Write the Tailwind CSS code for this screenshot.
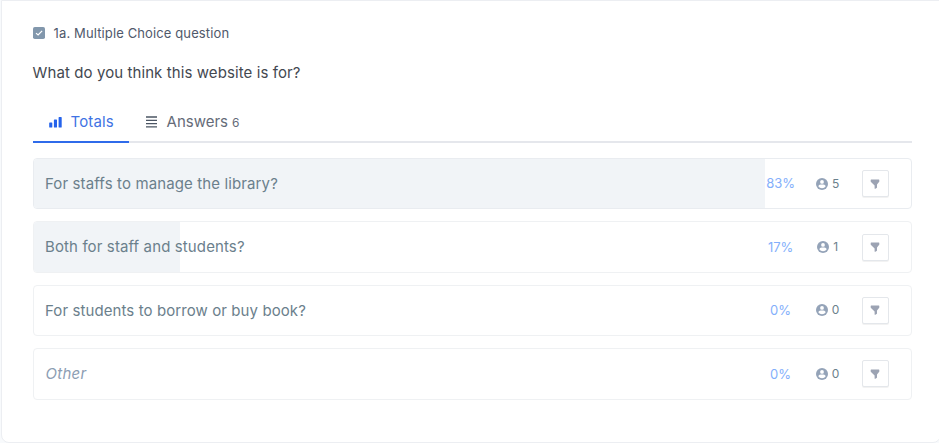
<!DOCTYPE html>
<html lang="en">
<head>
<meta charset="utf-8">
<title>Question results</title>
<script src="https://cdn.jsdelivr.net/npm/@tailwindcss/browser@4"></script>
</head>
<body class="h-[443px] overflow-hidden bg-[#f8fafc] pl-[1px] font-['Inter',sans-serif]">
<svg class="hidden">
  <symbol id="user" viewBox="0 0 12 12"><circle cx="6" cy="6" r="6" fill="#94a3b8"/><circle cx="6" cy="3.900" r="1.900" fill="#fff"/><path d="M2.300 8.300C2.300 6.900 4.500 6.500 6 6.500s3.700.4 3.700 1.800C8.900 9.600 7.600 10.200 6 10.200S3.100 9.600 2.300 8.300Z" fill="#fff"/></symbol>
  <symbol id="filter" viewBox="0 0 10 10"><path d="M1.200.6h7.600q.5 0 .5.500v1.300q0 .4-.3.700L7 5.400v3q0 .4-.4.700l-1.200.6q-.8.400-.8-.5V6.600L1 3.100Q.7 2.800.7 2.400V1.100Q.7.600 1.200.6Z" fill="#9ca3b3"/></symbol>
</svg>
<main class="h-[442.500px] w-[940px] rounded-b-[8px] border border-[#eceef2] bg-white pl-[30.600px] pr-[28px]">
  <header class="flex h-[64.400px] items-center pt-[1px]">
    <svg class="-mt-[1px] h-[12px] w-[12px]" viewBox="0 0 12 12"><rect width="12" height="12" rx="1.800" fill="#8297ac"/><path d="M3 6.100 5.100 8 9.100 3.800" fill="none" stroke="#fff" stroke-width="1.200"/></svg>
    <span class="ml-[9px] whitespace-nowrap text-[13px] tracking-[0.120px] text-[#50596b]">1a. Multiple Choice question</span>
  </header>
  <h1 class="h-[16px] whitespace-nowrap text-[15px] leading-[16px] tracking-[0.090px] text-[#434850]">What do you think this website is for?</h1>
  <nav class="mt-[19.600px] flex h-[42px] w-[879px] border-b-2 border-[#e5e7ec]">
    <div class="flex h-[42px] w-[96px] items-center border-b-2 border-[#2f6bea] pl-[16px] text-[#3f73e4]">
      <svg class="mt-[2px] h-[12px] w-[13px]" viewBox="0 0 13 12"><path d="M.8 6.500h1.900q.6 0 .6.600v3.800q0 .6-.6.600H.8q-.6 0-.6-.6V7.100q0-.6.600-.6zM5.500 3.500h1.900q.6 0 .6.600v6.800q0 .6-.6.600H5.500q-.6 0-.6-.6V4.100q0-.6.600-.6zM10.200.9h1.900q.6 0 .6.600v9.400q0 .6-.6.600h-1.900q-.6 0-.6-.6V1.500q0-.6.600-.6z" fill="#2563eb"/></svg>
      <span class="ml-[9px] pt-[3px] text-[15px] leading-[18px] tracking-[0.100px]">Totals</span>
    </div>
    <div class="flex h-[42px] items-center border-b-2 border-transparent pl-[17px] text-[#656b78]">
      <svg class="mt-[2px] h-[12px] w-[11px]" viewBox="0 0 11 12"><path d="M0 1h11M0 4.300h11M0 7.600h11M0 10.900h11" stroke="#4b5563" stroke-width="1.300"/></svg>
      <span class="ml-[10px] pt-[3px] text-[15px] leading-[18px]">Answers</span><span class="ml-[4px] pt-[4px] text-[12px] leading-[18px]">6</span>
    </div>
  </nav>
  <section class="mt-[15px] flex w-[879px] flex-col gap-[12px] text-[15px] text-[#6b808c]">
    <div class="relative flex h-[51.400px] items-center overflow-hidden rounded-[4px] border border-[#e9ecf0] pl-[11.400px] pr-[22px]">
      <div class="absolute inset-y-0 left-0 w-[731px] bg-[#f1f4f7]"></div>
      <span class="relative flex-1 pt-[1px] tracking-[0.120px]">For staffs to manage the library?</span>
      <span class="w-[40px] pt-[1px] text-center text-[13px] text-[#83affb]">83%</span>
      <span class="ml-[7px] flex w-[40px] items-center justify-center gap-[4px] text-[12px]"><svg class="h-[12px] w-[12px]"><use href="#user"/></svg>5</span>
      <span class="ml-[14px] flex h-[27px] w-[27px] items-center justify-center rounded-[2px] border border-[#e4e7eb] bg-white shadow-2xs"><svg class="h-[10px] w-[10px]"><use href="#filter"/></svg></span>
    </div>
    <div class="relative flex h-[51.400px] items-center overflow-hidden rounded-[4px] border border-[#eff1f3] pl-[11.400px] pr-[22px]">
      <div class="absolute inset-y-0 left-0 w-[146px] bg-[#f1f4f7]"></div>
      <span class="relative flex-1 pt-[1px] tracking-[0.120px]">Both for staff and students?</span>
      <span class="w-[40px] pt-[1px] text-center text-[13px] text-[#83affb]">17%</span>
      <span class="ml-[7px] flex w-[40px] items-center justify-center gap-[4px] text-[12px]"><svg class="h-[12px] w-[12px]"><use href="#user"/></svg>1</span>
      <span class="ml-[14px] flex h-[27px] w-[27px] items-center justify-center rounded-[2px] border border-[#e4e7eb] bg-white shadow-2xs"><svg class="h-[10px] w-[10px]"><use href="#filter"/></svg></span>
    </div>
    <div class="flex h-[51.400px] items-center rounded-[4px] border border-[#eff1f3] pl-[11.400px] pr-[22px]">
      <span class="flex-1 pt-[1px] tracking-[0.090px]">For students to borrow or buy book?</span>
      <span class="w-[40px] pt-[1px] text-center text-[13px] text-[#83affb]">0%</span>
      <span class="ml-[7px] flex w-[40px] items-center justify-center gap-[4px] text-[12px]"><svg class="h-[12px] w-[12px]"><use href="#user"/></svg>0</span>
      <span class="ml-[14px] flex h-[27px] w-[27px] items-center justify-center rounded-[2px] border border-[#e4e7eb] bg-white shadow-2xs"><svg class="h-[10px] w-[10px]"><use href="#filter"/></svg></span>
    </div>
    <div class="flex h-[51.400px] items-center rounded-[4px] border border-[#eff1f3] pl-[12px] pr-[22px]">
      <span class="flex-1 italic tracking-[0.250px] text-[#8c9db3]">Other</span>
      <span class="w-[40px] pt-[1px] text-center text-[13px] text-[#83affb]">0%</span>
      <span class="ml-[7px] flex w-[40px] items-center justify-center gap-[4px] text-[12px]"><svg class="h-[12px] w-[12px]"><use href="#user"/></svg>0</span>
      <span class="ml-[14px] flex h-[27px] w-[27px] items-center justify-center rounded-[2px] border border-[#e4e7eb] bg-white shadow-2xs"><svg class="h-[10px] w-[10px]"><use href="#filter"/></svg></span>
    </div>
  </section>
</main>
</body>
</html>
